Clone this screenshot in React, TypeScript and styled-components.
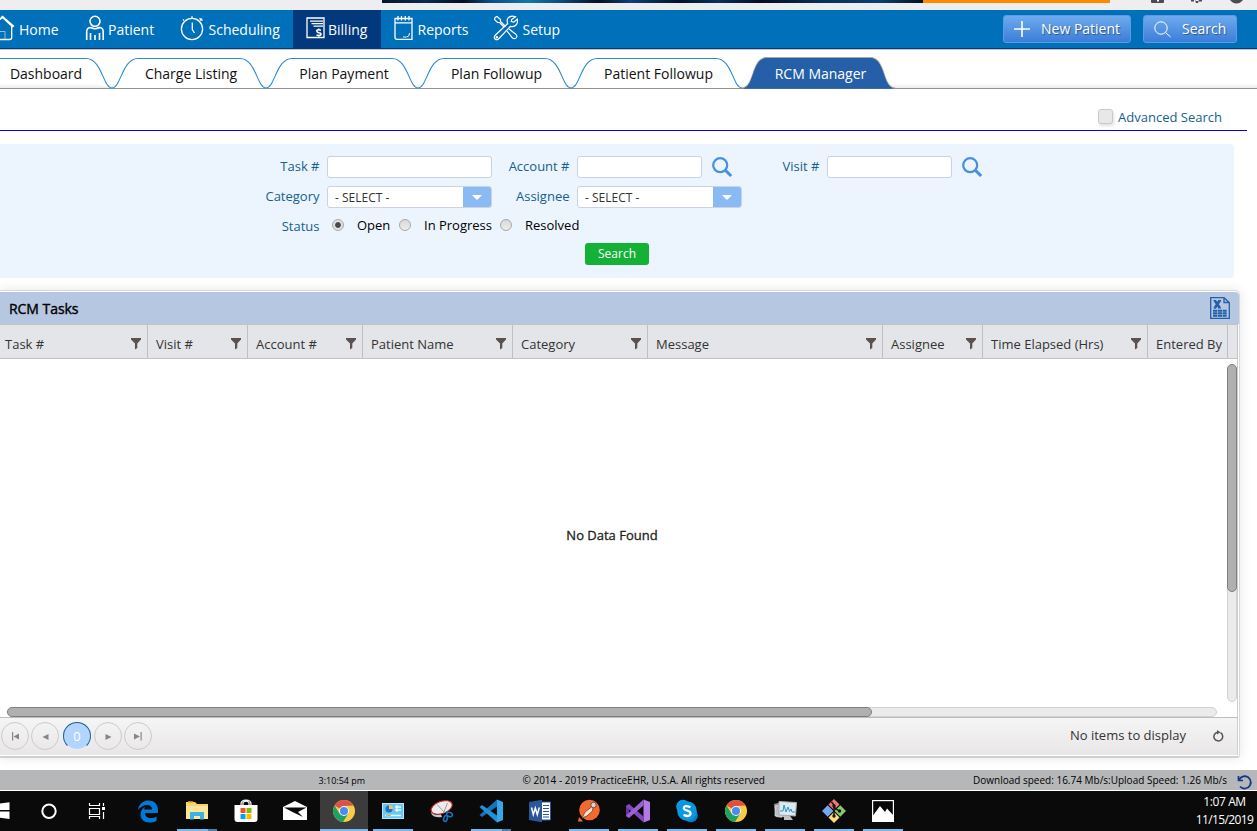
import React from "react";
import styled, { createGlobalStyle, css } from "styled-components";

const Global = createGlobalStyle`
  * { box-sizing: border-box; }
  html, body { margin: 0; padding: 0; overflow: hidden; }
  body { font-family: "Open Sans", "Noto Sans", sans-serif; font-size: 13px; color: #000; background: #fff; }
`;

const Page = styled.div`
  width: 1257px; height: 831px; overflow: hidden; background: #fff;
  display: flex; flex-direction: column;
`;

/* ---------- browser strip ---------- */
const BrowserStrip = styled.div`
  height: 10px; flex: none; background: #eeeef1; display: flex; align-items: flex-start; padding-left: 382px;
`;
const Banner = styled.div`
  width: 541px; height: 3px;
  background: linear-gradient(90deg, #06132e 0, #072a55 8%, #04101f 15%, #0b4d86 20%, #1079a4 27%, #0a4b80 33%, #041024 40%, #0b3f7d 46%, #04132c 55%, #083263 62%, #030d20 70%, #08305e 82%, #0b3e75 92%, #031024 100%);
`;
const BannerTail = styled.div`width: 187px; height: 3px; background: #ff8a00;`;
const StripIcons = styled.svg`margin-left: 40px; flex: none;`;

/* ---------- main navigation ---------- */
const Nav = styled.nav`
  height: 40px; flex: none; background: #0070ba; border-bottom: 1px solid #c4c4c4;
  box-shadow: inset 0 -1px 0 #023a7d; display: flex; align-items: stretch;
`;
const NavItem = styled.div<{ $w: number; $pad: number; $gap: number; $active?: boolean }>`
  width: ${p => p.$w}px; padding-left: ${p => p.$pad}px; gap: ${p => p.$gap}px;
  display: flex; align-items: center; flex: none; color: #fff; font-size: 14px; white-space: nowrap;
  ${p => p.$active && css`background: #02397c;`}
  svg { flex: none; display: block; margin-top: -3px; }
`;
const NavButtons = styled.div`
  margin-left: auto; margin-right: 20px; padding-top: 5px; display: flex; gap: 12px;
`;
const BlueButton = styled.button<{ $w: number; $gap: number }>`
  width: ${p => p.$w}px; height: 28px; border: 1px solid #5b9be6; border-radius: 3px; padding: 0 0 2px 10px;
  background: linear-gradient(#6eaaec, #3b7ed9); color: #fff; font: 14px "Open Sans", sans-serif;
  display: flex; align-items: center; gap: ${p => p.$gap}px; text-shadow: 1px 1px 1px rgba(0,0,0,.4); white-space: nowrap;
  svg { flex: none; margin-top: 2px; }
`;

/* ---------- tabs ---------- */
const Tabs = styled.div`
  height: 39px; flex: none; display: flex; align-items: flex-end; border-bottom: 1px solid #929292;
  background: linear-gradient(#fff 88%, #ececec);
`;
const TabBox = styled.div<{ $w: number; $active?: boolean; $first?: boolean }>`
  position: relative; width: ${p => p.$w}px; height: 30px; flex: none; text-align: center; line-height: 31px;
  padding: ${p => (p.$first ? "0 20px 0 0" : "0 0 0 4px")}; font-size: 14px; color: ${p => (p.$active ? "#fff" : "#111")};
  white-space: nowrap;
  span { position: relative; }
`;
const TabShape = styled.svg`position: absolute; left: 0; top: -2px; overflow: visible;`;

/* ---------- advanced search ---------- */
const AdvancedRow = styled.div`
  height: 42px; width: 1247px; flex: none; border-bottom: 1px solid #0000fa; display: flex; align-items: center;
  justify-content: flex-end; gap: 5px; padding: 14px 25px 0 0; color: #165f8f;
`;
const CheckBox = styled.i`
  width: 15px; height: 15px; border: 1px solid #c9c9c9; border-radius: 3px; background: #e8e8e8; box-shadow: 1px 2px 3px rgba(0,0,0,.12);
`;

/* ---------- search form ---------- */
const Form = styled.section`
  width: 1234px; height: 134px; flex: none; margin-top: 13px; padding-top: 12px; background: #ecf5fd;
  border-radius: 0 4px 4px 0;
`;
const FormRow = styled.div<{ $h: number }>`display: flex; align-items: center; height: ${p => p.$h}px;`;
const Label = styled.label<{ $w: number }>`
  width: ${p => p.$w + 8}px; padding: 0 7.5px 2px 0; flex: none; text-align: right; color: #165f8f; white-space: nowrap;
`;
const Field = styled.div<{ $w: number }>`
  width: ${p => p.$w}px; height: 22px; flex: none; background: #fff; border: 1px solid #cbd2e0; border-radius: 3px;
`;
const SelectField = styled(Field)`
  display: flex; justify-content: space-between; align-items: stretch; font-size: 12px; color: #333; line-height: 21px; padding-left: 7px;
  overflow: hidden;
`;
const Arrow = styled.span`
  width: 28px; background: #8abaf3; display: flex; align-items: center; justify-content: center;
  &::after { content: ""; border: 5px solid transparent; border-top-color: #fff; border-bottom: 0; margin-left: -1px; }
`;
const Lens = styled.svg`margin: -1px 0 0 10px; flex: none;`;
const StatusRow = styled(FormRow)`padding-bottom: 4px; label { padding-bottom: 0; padding-top: 1px; }`;
const Radio = styled.i<{ $on?: boolean; $ml?: number }>`
  width: 12px; height: 12px; border-radius: 50%; border: 1px solid #a8a8a8; flex: none; margin-left: ${p => p.$ml ?? 0}px;
  background: ${p => (p.$on ? "radial-gradient(circle, #4a4a4a 0 2.4px, #e2e2e2 3.4px)" : "linear-gradient(#d9d9d9, #ececec)")};
`;
const RadioText = styled.span<{ $w: number }>`width: ${p => p.$w}px; margin-left: 13px; white-space: nowrap; flex: none;`;
const SubmitButton = styled.button`
  display: block; width: 64px; height: 22px; margin: 5px 0 0 585px; padding: 0 0 1px; border: 0; border-radius: 3px; background: #13b136;
  color: #fff; font: 12px "Open Sans", sans-serif;
`;

/* ---------- grid ---------- */
const GridPanel = styled.section`
  width: 1240px; height: 468px; flex: none; margin-top: 12px; border: 1px solid #d9d9d9; border-left: 0; border-bottom: 2px solid #cfcfcf;
  border-radius: 0 5px 3px 0; padding-top: 1px; box-shadow: 0 0 12px rgba(0,0,0,.1); display: flex; flex-direction: column;
`;
const GridTitle = styled.div`
  height: 32px; flex: none; background: #b6c7e2; border-radius: 0 4px 0 0; display: flex; align-items: center; justify-content: space-between;
  padding: 0 9px 0 9px; font-size: 14px; letter-spacing: -0.05px; -webkit-text-stroke: 0.4px #000;
`;
const HeaderRow = styled.div`
  width: 1238px; height: 35px; flex: none; display: flex; background: #e4e5e9; border: 1px solid #c3c3c6; border-width: 1px 1px 1px 0;
`;
const HeaderCell = styled.div<{ $w: number; $first?: boolean }>`
  width: ${p => p.$w}px; flex: none; border-right: 1px solid #c0c0c3; padding: 5px 6px 0 ${p => (p.$first ? 5 : 8)}px;
  display: flex; align-items: center; justify-content: space-between; color: #333; white-space: nowrap;
  svg { flex: none; margin-top: -1px; }
`;
const GridBody = styled.div`
  width: 1238px; height: 358px; flex: none; border-right: 1px solid #cfcfcf; display: grid;
  grid-template-columns: 1227px 10px; grid-template-rows: 348px 10px;
`;
const Empty = styled.div`
  display: flex; align-items: center; justify-content: center; padding: 4px 3px 0 0; -webkit-text-stroke: 0.3px #222; color: #222;
`;
const VTrack = styled.div`
  height: 338px; margin-top: 5px; background: #ebebeb; border: 1px solid #d2d2d2; border-radius: 5px;
`;
const VThumb = styled.div`margin: -1px; height: 228px; background: #b0b0b0; border: 1px solid #7e7e7e; border-radius: 5px;`;
const HTrack = styled.div`
  width: 1210px; margin-left: 7px; height: 10px; background: #ebebeb; border: 1px solid #d2d2d2; border-radius: 5px;
`;
const HThumb = styled.div`margin: -1px; width: 865px; height: 10px; background: #b0b0b0; border: 1px solid #7e7e7e; border-radius: 5px;`;
const Pager = styled.div`
  width: 1238px; height: 38px; flex: none; border-top: 1px solid #bdbdbd; border-right: 1px solid #cfcfcf;
  background: linear-gradient(#f6f5f6, #e8e6e7); display: flex; align-items: center; padding: 0 13px 2px 1px;
`;
const PageButton = styled.div<{ $ml?: number; $active?: boolean }>`
  width: 28px; height: 28px; flex: none; border-radius: 50%; border: 1px solid #cbcbcb; margin-left: ${p => p.$ml ?? 0}px;
  display: flex; align-items: center; justify-content: center; color: #fff; padding: 2px 0 0 1px;
  ${p => p.$active && css`background: #b2d4fd; border-color: #1a6292; border-bottom-color: #e8eef7; padding: 1px 0 0;`}
`;
const PagerInfo = styled.span`margin: -2px 26px 0 auto; color: #333;`;

/* ---------- footer ---------- */
const Footer = styled.footer`
  height: 20px; flex: none; margin-top: 12px; background: #b5b7b9; display: grid;
  grid-template-columns: 318.5px 204px 450.5px 264px 20px; align-items: center; font-size: 10px; white-space: nowrap;
  svg { margin-top: 5px; }
`;
const FooterText = styled.span<{ $col: number; $small?: boolean }>`
  grid-column: ${p => p.$col}; ${p => p.$small && css`font-size: 9px; padding-top: 1px;`}
`;

/* ---------- taskbar ---------- */
const Taskbar = styled.div`
  height: 40px; flex: none; margin-top: 1px; background: #0a0a0a; display: flex;
`;
const TaskItems = styled.div`display: flex; gap: 1px; margin-left: -23px; flex: none;`;
const TaskItem = styled.div<{ $active?: boolean; $nudge?: number }>`
  width: 48px; height: 40px; display: flex; flex-direction: column; align-items: center; justify-content: space-between;
  background: ${p => (p.$active ? "#3c3c3c" : "transparent")}; padding-right: ${p => p.$nudge ?? 0}px;
  svg { display: block; margin-top: 8px; overflow: visible; }
`;
const Underline = styled.i<{ $wide?: boolean; $split?: boolean; $off?: boolean }>`
  width: ${p => (p.$wide ? 48 : 40)}px; height: 2px; visibility: ${p => (p.$off ? "hidden" : "visible")};
  background: ${p => (p.$split ? "linear-gradient(90deg, #76b9ed 31px, #4d7fa8 31px)" : "#76b9ed")};
`;
const Clock = styled.div`
  margin-left: auto; width: 63px; padding: 2px 2px 0 0; color: #fff; font-size: 12px; line-height: 18px; white-space: nowrap;
  display: flex; flex-direction: column; align-items: center; letter-spacing: -0.6px;
`;
const Time = styled.span`letter-spacing: -0.4px;`;

const stroke = { fill: "none", stroke: "#fff", strokeWidth: 1.3 } as const;

const HomeIcon = () => (
  <svg width="15" height="26" viewBox="0 0 15 26" {...stroke}>
    <path d="M-8 12 L2.500 1.500 L13.500 11 L11.700 12.500 M0 4.500 L2.500 2.500 L11.700 11 V22.500 Q11.700 24.500 9.500 24.500 H-2" />
    <path d="M0 16.500 H5 V24" strokeWidth=".8" opacity=".7" />
  </svg>
);
const PatientIcon = () => (
  <svg width="20" height="26" viewBox="0 0 20 26" {...stroke} strokeWidth="1.600">
    <circle cx="10" cy="6.300" r="5" />
    <path d="M1.700 25 V16.500 Q1.900 12.500 5.800 12.500 Q10 15 14.200 12.500 Q18 12.500 18.200 16.500 V25 M5.500 25 V18 M14.500 25 V18 M10 25 V20" />
  </svg>
);
const ClockIcon = () => (
  <svg width="24" height="26" viewBox="0 0 24 26" {...stroke}>
    <circle cx="12" cy="14" r="10.600" />
    <path d="M12.300 7.500 V14.500 L14.500 18 M12 3.500 V1.200 M20 5.500 L22 3.600 M19.500 3.200 L22.500 5.500 M4 5.500 L3 4.600" />
  </svg>
);
const BillingIcon = () => (
  <svg width="19" height="22" viewBox="0 0 19 22" {...stroke}>
    <path d="M18 10 V1 H1 V20.500 H18 V10 M4 4.200 H17 M5.500 6.700 H17 M7.500 9.200 H17" />
    <path d="M15 13.200 Q11.200 12 10.700 13.800 Q10.700 15.200 12.800 15.700 Q15.300 16.200 15 17.500 Q14 19 10.500 18 M12.800 11.500 V13 M12.800 18 V19.800" strokeWidth="1.500" />
  </svg>
);
const ReportsIcon = () => (
  <svg width="19" height="26" viewBox="0 0 19 26" {...stroke}>
    <path d="M1 3.500 H18 V24.300 H3 Q1 24.300 1 22.300 Z M1 7.800 H18 M4 1 V5.500 M7.500 1 V5.500 M11.300 1 V5.500 M15 1 V5.500" />
    <path d="M9 22 H12.500 Q15.500 22 15.500 18" strokeWidth=".9" />
  </svg>
);
const SetupIcon = () => (
  <svg width="26" height="26" viewBox="0 0 26 26" {...stroke} strokeWidth="1.200">
    <path d="M2 2.500 L4 1.500 L7.500 4.500 L7.500 6.500 L12.500 11.500 M2 2.500 L1.500 4.500 L4.500 7.500 H6.500 L11 12 M14 16 L19.500 23 Q22 24.500 23.500 22.500 Q24.500 20.500 22.500 19 L16 14" />
    <path d="M22.500 1.800 Q17 -.5 14.500 4 Q13.800 6 14.700 8.500 L2 20.500 Q.5 22.500 2 24 Q3.500 25.500 5.500 24 L17.500 11.300 Q21 12.300 23.500 9.500 Q25 7 24.300 4.200 L20.800 7.200 L18.300 6.500 L18.600 4.500 Z" />
    <circle cx="3.800" cy="22.200" r=".7" />
  </svg>
);
const Filter = () => (
  <svg width="10" height="12" viewBox="0 0 10 12"><path d="M0 0 H10 V1.500 L6.300 5.500 V10 L4 11.500 V5.500 L0 1.500 Z" fill="#5d5150" /></svg>
);
const SearchLens = () => (
  <Lens width="20" height="20" viewBox="0 0 20 20" fill="none" stroke="#4a90e2">
    <circle cx="8.200" cy="8.200" r="7" strokeWidth="2.300" /><path d="M13.200 13.200 L19.200 19" strokeWidth="3" />
  </Lens>
);
const ExcelIcon = () => (
  <svg width="20" height="22" viewBox="0 0 20 22" fill="none" stroke="#2360a8">
    <path d="M.7 .7 H14 L19.300 5.500 V21.300 H.7 Z M14 .7 V5.500 H19.300" strokeWidth="1.300" />
    <path d="M3.500 3.700 H6 M8.500 3.700 H11 M3.500 11 H6 M8.500 11 H11" strokeWidth="1.200" />
    <path d="M4.800 3.500 L9.800 11 M9.800 3.500 L4.800 11" strokeWidth="2.600" />
    <path d="M3 13.700 H16.700 M3 16.200 H16.700 M3 18.700 H16.700" strokeWidth="2" strokeDasharray="4.200 .6" />
  </svg>
);

const Chrome = () => (
  <svg width="24" height="24" viewBox="0 0 24 24">
    <circle cx="12" cy="12" r="11" fill="#fbcb43" />
    <path d="M12 12 L2.500 6.500 A11 11 0 0 1 21.500 6.500 L12 7 Z" fill="#dd5144" />
    <path d="M2.500 6.500 A11 11 0 0 0 11 23 L16.300 14.500 L12 12 L7.500 14.500 Z" fill="#1da260" />
    <circle cx="12" cy="12" r="5" fill="#f4f4f4" /><circle cx="12" cy="12" r="4" fill="#4a8af4" />
  </svg>
);

const taskIcons: Record<string, React.ReactNode> = {
  windows: <svg width="18" height="24" viewBox="0 0 18 24" fill="#fff"><path d="M0 5.500 L7 4.500 V11 H0 Z M8 4.400 L17.500 3.200 V11 H8 Z M0 12.500 H7 V18.500 L0 17.500 Z M8 12.500 H17.500 V20 L8 18.800 Z" /></svg>,
  cortana: <svg width="18" height="24" viewBox="0 0 18 24"><circle cx="9" cy="12.300" r="6.700" fill="none" stroke="#fff" strokeWidth="2" /></svg>,
  view: <svg width="18" height="24" viewBox="0 0 18 24" fill="none" stroke="#fff"><path d="M1.500 4 V6.500 H11.500 V4 M1.500 9.500 H11.500 V15.500 H1.500 Z M1.500 20 V17.500 H11.500 V20 M15.500 4 V7 M15.500 13 V20" strokeWidth="1.200" /><path d="M14 8 h3 v3 h-3 z" fill="#fff" stroke="none" /></svg>,
  edge: <svg width="22" height="24" viewBox="0 0 22 24"><path d="M1 11 C2 4 7 1.500 11.500 1.500 C18 1.500 21 6 21 11 V14 H8 C8 18 11 19 14 19 C16 19 18 18.500 19.500 17.500 V22 C17 23.200 15 23.500 12.500 23.500 C7 23.500 3.500 20 3.500 15.500 C3.500 12 5.500 9 8.500 7.500 C7.500 8.500 7.300 10 7.200 10.500 H15 C15 7.500 13 6 10.500 6 C6.500 6 3 8 1 11 Z" fill="#0078d7" /></svg>,
  folder: <svg width="22" height="24" viewBox="0 0 22 24"><path d="M0 3 H9 L11 5 H22 V20 H0 Z" fill="#f8d46a" /><path d="M0 7 H22 V20 H0 Z" fill="#fde59a" /><path d="M4 13 H18 V20.500 H14 V17 H8 V20.500 H4 Z" fill="#3ab2e8" /><path d="M2 3 H7" stroke="#e8a820" strokeWidth="1.500" /></svg>,
  store: <svg width="24" height="24" viewBox="0 0 24 24"><path d="M7 7 V5 Q7 1 12 1 Q17 1 17 5 V7 M9 7 V3.500 Q12 .5 15 3.500 V7" fill="none" stroke="#fff" strokeWidth="1.200" /><path d="M0.500 6 H23.500 V20 Q23.500 23 20.500 23 H3.500 Q.5 23 .5 20 Z" fill="#fff" /><path d="M6.500 9 h5 v5 h-5z" fill="#f25022" /><path d="M12.500 9 h5 v5 h-5z" fill="#7fba00" /><path d="M6.500 15 h5 v5 h-5z" fill="#00a4ef" /><path d="M12.500 15 h5 v5 h-5z" fill="#ffb900" /></svg>,
  mail: <svg width="24" height="24" viewBox="0 0 24 24"><path d="M0 8 L12 2 L24 8 V21 H0 Z" fill="#fff" /><path d="M1 8.500 H23.500 L15 13 L20 18 L9.500 13 Z" fill="#0a0a0a" /></svg>,
  chrome: <Chrome />,
  panel: <svg width="22" height="24" viewBox="0 0 22 24"><rect x=".5" y="4.500" width="21" height="15" fill="#69c8f1" stroke="#b8e8fb" /><circle cx="7" cy="10" r="3.600" fill="#2770bd" /><path d="M7 10 V6 A4 4 0 0 1 11 10 Z" fill="#f6c45a" /><path d="M13 8 h6 M13 11 h6 M15 6 v7 M3 16.500 H19" stroke="#e9f9ff" strokeWidth="1.300" /><path d="M4 16.500 h5" stroke="#f1a53b" /></svg>,
  snip: <svg width="24" height="24" viewBox="0 0 24 24"><ellipse cx="11.500" cy="8.500" rx="11" ry="6" transform="rotate(-20 11.500 8)" fill="#ececec" stroke="#d9252c" strokeWidth="1" /><path d="M1 13 Q4 17 11 15.500 L12 18 Q4 19 1.500 15Z" fill="#c6c9cd" /><path d="M7 5.500 L15 14 M17.500 4 L13.500 14" stroke="#9a9a9a" strokeWidth="1" /><g fill="none" stroke="#1674b8" strokeWidth="1.600"><ellipse cx="19.500" cy="15.500" rx="3" ry="2" transform="rotate(20 19.500 15.500)" /><ellipse cx="15.500" cy="19.500" rx="1.800" ry="3" transform="rotate(15 15.500 19.500)" /></g></svg>,
  code: <svg width="24" height="24" viewBox="0 0 24 24"><path d="M18 0.500 L24 3 V21 L18 23.500 Z" fill="#35a8ea" /><path d="M18 .5 V7.500 L3 18 L.5 16 Z" fill="#1673b8" /><path d="M18 23.500 V16.500 L3 6 L.5 8 Z" fill="#2390d5" /></svg>,
  word: <svg width="22" height="24" viewBox="0 0 22 24"><path d="M12 3 H21.500 V21 H12 Z" fill="#fff" stroke="#2b579a" /><path d="M14 6.500 h6 M14 9.500 h6 M14 12.500 h6 M14 15.500 h6 M14 18 h6" stroke="#2b579a" /><path d="M0 3 L13 .8 V23.200 L0 21 Z" fill="#2b579a" /><path d="M2.500 8.500 L4.300 15.500 L6.300 9 L8.300 15.500 L10.300 8.500" fill="none" stroke="#fff" strokeWidth="1.500" /></svg>,
  postman: <svg width="22" height="24" viewBox="0 0 22 24"><circle cx="11.500" cy="11" r="10.300" fill="#f4692f" /><path d="M0 22.500 L1 18 L5 22.500Z" fill="#f4692f" /><circle cx="15.500" cy="6" r="2.700" fill="#e0d5ce" stroke="#3b2c25" strokeWidth=".7" /><path d="M13.500 8 L7 13 L4 19 L9 17 L14.500 12 L15 9Z" fill="#f5ded2" stroke="#7e3b20" strokeWidth=".8" /></svg>,
  studio: <svg width="24" height="24" viewBox="0 0 24 24"><path d="M17.500 .5 L24 3 V21 L17.500 23.500 Z" fill="#b07be8" /><path d="M0 6.500 L3 5 V19 L0 17.500 Z" fill="#68309d" /><path d="M3 5 L17.500 17.500 V23.500 L0 7.500Z" fill="#8149bd" /><path d="M3 19 L17.500 6.500 V.5 L0 16.500 Z" fill="#9b61d2" /></svg>,
  skype: <svg width="22" height="24" viewBox="0 0 22 24"><circle cx="7" cy="7.500" r="6.800" fill="#0a9be5" /><circle cx="15" cy="16.500" r="6.800" fill="#087ccb" /><circle cx="11" cy="12" r="9.800" fill="#0897e1" /><path d="M14.500 8.300 Q8 5.500 7.800 9 Q8 11 11.300 11.600 Q14.800 12.300 14.500 15 Q13.500 18.500 7.500 15.900" fill="none" stroke="#fff" strokeWidth="2.300" /></svg>,
  monitor: <svg width="24" height="24" viewBox="0 0 24 24"><path d="M1 5 L9 3 V19 L3 18Z" fill="#8e9498" /><path d="M2 7 L14 5 V18 L2 17Z" fill="#bcbfc2" stroke="#eee" strokeWidth=".6" /><path d="M6 2.500 L23.500 3.500 L22.500 17 L6 16 Z" fill="#dce9ef" stroke="#a7acb0" /><path d="M7 12 H10 L11 6 L13 13 L15 8 L16.500 12.500 L18 10 L19 13 H22" fill="none" stroke="#3295bf" /><path d="M11 17 h6 l3 4 h-9z" fill="#c1c4c6" /></svg>,
  git: <svg width="24" height="24" viewBox="0 0 24 24"><path d="M12 0 L17.500 5.500 L12 11 L6.500 5.500 Z" fill="#f27373" /><path d="M5.700 6.300 L11.400 12 L5.700 17.700 L0 12 Z" fill="#74a7f0" /><path d="M18.300 6.300 L24 12 L18.300 17.700 L12.600 12 Z" fill="#86cb65" /><path d="M12 13 L17.500 18.500 L12 24 L6.500 18.500 Z" fill="#f8df7b" /><path d="M9.500 3 L12 6 V17 M12 8 L17 12" fill="none" stroke="#141414" strokeWidth="1.500" /><circle cx="12" cy="17" r="1.700" fill="#141414" /><circle cx="17.500" cy="12" r="1.700" fill="#141414" /><circle cx="12" cy="7" r="1.700" fill="#141414" /></svg>,
  photos: <svg width="22" height="24" viewBox="0 0 22 24"><rect x=".6" y="1.600" width="20.800" height="20.800" fill="#080808" stroke="#fff" strokeWidth="1.200" /><path d="M1 16.500 L8 7 L13 13 L15 9.500 L21 16 V22 H1 Z" fill="#fff" /></svg>,
};

const tasks: { id: string; line?: "plain" | "split" | "wide"; nudge?: number }[] = [
  { id: "windows" }, { id: "cortana", nudge: 2 }, { id: "view", nudge: 4 }, { id: "edge", nudge: 1 }, { id: "folder", line: "split" }, { id: "store" }, { id: "mail" },
  { id: "chrome", line: "wide" }, { id: "panel", line: "plain" }, { id: "snip" }, { id: "code", line: "split" }, { id: "word" },
  { id: "postman", line: "plain" }, { id: "studio", line: "plain" }, { id: "skype", line: "plain" }, { id: "chrome", line: "plain" },
  { id: "monitor", line: "plain" }, { id: "git", line: "plain" }, { id: "photos", line: "plain" },
];

function Tab({ w, label, active, first }: { w: number; label: string; active?: boolean; first?: boolean }) {
  const rise = first ? "M-2 2.500" : "M0 32 C9 32 10 2.500 26 2.500";
  const top = `${rise} H${w - 26} C${w - 10} 2.500 ${w - 9} 32 ${w} 32`;
  const bold = `M0 32 C13 31.500 9 1.500 25 1.500 H${w - 25} C${w - 9} 1.500 ${w - 13} 31.500 ${w} 32`;
  return (
    <TabBox $w={w} $active={active} $first={first}>
      <TabShape width={w} height="33">
        <path d={active ? bold : top} fill={active ? "#245fa8" : "#fff"} stroke={active ? "#a9a9a9" : "#2d8acb"} strokeWidth="1.100" />
        {active && <path d={bold} fill="#245fa8" transform="translate(0 .7)" />}
      </TabShape>
      <span>{label}</span>
    </TabBox>
  );
}

const columns: [string, number][] = [
  ["Task #", 148], ["Visit #", 100], ["Account #", 115], ["Patient Name", 150], ["Category", 135], ["Message", 235],
  ["Assignee", 100], ["Time Elapsed (Hrs)", 165], ["Entered By", 80],
];

export default function App() {
  return (
    <>
      <Global />
      <Page>
        <BrowserStrip>
          <Banner /><BannerTail />
          <StripIcons width="100" height="4" viewBox="0 0 100 4" fill="#4c4c4f">
            <path d="M1 0 H14 V2 Q14 3 13 3 H2 Q1 3 1 2 Z" /><path d="M7 0 h2 v1.500 h-2z" fill="#fff" />
            <path d="M41 0 h3 v1.500 h-3z M49 0 h3 v1.500 h-3z M45 0 L46 3 H48 L49 0 L48 1 H46Z" />
            <path d="M80 0 H93 Q90 3.500 86.500 3.500 Q83 3.500 80 0Z" />
          </StripIcons>
        </BrowserStrip>
        <Nav>
          <NavItem $w={72} $pad={0} $gap={4}><HomeIcon />Home</NavItem>
          <NavItem $w={95} $pad={13} $gap={3}><PatientIcon />Patient</NavItem>
          <NavItem $w={126} $pad={12.5} $gap={5}><ClockIcon />Scheduling</NavItem>
          <NavItem $w={88} $pad={13} $gap={3} $active><BillingIcon />Billing</NavItem>
          <NavItem $w={100} $pad={13} $gap={4.5}><ReportsIcon />Reports</NavItem>
          <NavItem $w={92} $pad={12} $gap={3.5}><SetupIcon />Setup</NavItem>
          <NavButtons>
            <BlueButton $w={128} $gap={11}>
              <svg width="16" height="16" viewBox="0 0 16 16" stroke="#fff" strokeWidth="1.600"><path d="M8 0 V16 M0 8 H16" /></svg>New Patient
            </BlueButton>
            <BlueButton $w={94} $gap={11}>
              <svg width="17" height="17" viewBox="0 0 17 17" {...stroke} strokeWidth="1"><circle cx="7" cy="7" r="6.200" /><path d="M11.500 11.500 L16.500 16" /></svg>Search
            </BlueButton>
          </NavButtons>
        </Nav>
        <Tabs>
          <Tab w={112} label="Dashboard" first />
          <Tab w={154} label="Charge Listing" />
          <Tab w={152} label="Plan Payment" />
          <Tab w={153} label="Plan Followup" />
          <Tab w={171} label="Patient Followup" />
          <Tab w={153} label="RCM Manager" active />
        </Tabs>
        <AdvancedRow><CheckBox />Advanced Search</AdvancedRow>
        <Form>
          <FormRow $h={22}>
            <Label $w={319}>Task #</Label><Field $w={165} />
            <Label $w={77}>Account #</Label><Field $w={125} /><SearchLens />
            <Label $w={87}>Visit #</Label><Field $w={125} /><SearchLens />
          </FormRow>
          <FormRow $h={38}>
            <Label $w={319}>Category</Label><SelectField $w={165}>- SELECT -<Arrow /></SelectField>
            <Label $w={77}>Assignee</Label><SelectField $w={165}>- SELECT -<Arrow /></SelectField>
          </FormRow>
          <StatusRow $h={22}>
            <Label $w={319}>Status</Label>
            <Radio $on $ml={5} /><RadioText $w={42}>Open</RadioText>
            <Radio /><RadioText $w={76}>In Progress</RadioText>
            <Radio /><RadioText $w={60}>Resolved</RadioText>
          </StatusRow>
          <SubmitButton>Search</SubmitButton>
        </Form>
        <GridPanel>
          <GridTitle>RCM Tasks<ExcelIcon /></GridTitle>
          <HeaderRow>
            {columns.map(([name, w], i) => (
              <HeaderCell key={name} $w={w} $first={i === 0}>{name}{i < 8 && <Filter />}</HeaderCell>
            ))}
          </HeaderRow>
          <GridBody>
            <Empty>No Data Found</Empty>
            <VTrack><VThumb /></VTrack>
            <HTrack><HThumb /></HTrack>
          </GridBody>
          <Pager>
            <PageButton><svg width="9" height="9" fill="#8d8381"><path d="M1 0 h1.200 v8.500 h-1.200z M8 1.500 V7.500 L2.500 4.500Z" /></svg></PageButton>
            <PageButton $ml={2}><svg width="7" height="8" fill="#8d8381"><path d="M6.500 1 V7 L.5 4Z" /></svg></PageButton>
            <PageButton $ml={4} $active>0</PageButton>
            <PageButton $ml={3}><svg width="7" height="8" fill="#8d8381"><path d="M.5 1 V7 L6.500 4Z" /></svg></PageButton>
            <PageButton $ml={2}><svg width="9" height="9" fill="#8d8381"><path d="M6.500 0 h1.200 v8.500 h-1.200z M0 1.500 V7.500 L6 4.500Z" /></svg></PageButton>
            <PagerInfo>No items to display</PagerInfo>
            <svg width="12" height="12" viewBox="0 0 12 12" fill="none" stroke="#555" strokeWidth="1.500"><path d="M8.500 2.700 A4.400 4.400 0 1 1 5.500 2.200" /><path d="M5 0 L8.500 2.200 L5 4.500Z" fill="#555" stroke="none" /></svg>
          </Pager>
        </GridPanel>
        <Footer>
          <FooterText $col={2} $small>3:10:54 pm</FooterText>
          <FooterText $col={3}>© 2014 - 2019 PracticeEHR, U.S.A. All rights reserved</FooterText>
          <FooterText $col={4}>Download speed: 16.74 Mb/s:Upload Speed: 1.26 Mb/s</FooterText>
          <svg width="16" height="15" viewBox="0 0 16 15" fill="none" stroke="#16358c" strokeWidth="1.700"><path d="M1.500 1 V5.500 H6 M2 5.200 Q4 1.200 8.500 1.200 A6.200 6.200 0 1 1 3 11.500" /></svg>
        </Footer>
        <Taskbar>
          <TaskItems>
            {tasks.map((t, i) => (
              <TaskItem key={i} $active={t.line === "wide"} $nudge={t.nudge}>
                {taskIcons[t.id]}
                <Underline $wide={t.line === "wide"} $split={t.line === "split"} $off={!t.line} />
              </TaskItem>
            ))}
          </TaskItems>
          <Clock><Time>1:07 AM</Time><span>11/15/2019</span></Clock>
        </Taskbar>
      </Page>
    </>
  );
}
